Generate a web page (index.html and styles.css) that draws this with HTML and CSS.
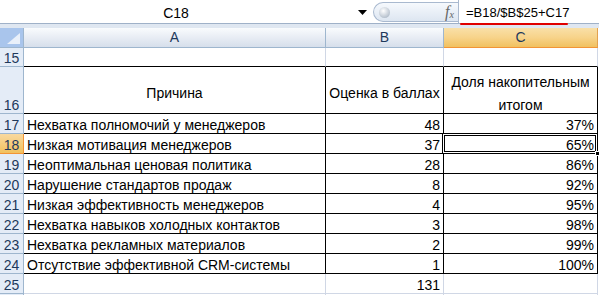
FILE: index.html
```html
<!DOCTYPE html>
<html>
<head>
<meta charset="utf-8">
<link rel="stylesheet" href="styles.css">
</head>
<body>
<div class="app">
  <div class="fbar">
    <div class="namebox">
      <span class="name">C18</span>
      <svg class="arrow" width="9" height="5" viewBox="0 0 9 5"><path d="M0 0H9L4.5 5Z" fill="#000"/></svg>
    </div>
    <div class="pill">
      <span class="knob"></span>
      <span class="fx">f<sub>x</sub></span>
    </div>
    <div class="formula"><span class="ftext">=B18/$B$25+C17</span><span class="redline"></span></div>
  </div>
  <div class="band"></div>
  <div class="sheet">
    <div class="corner"><span class="tri"></span></div>
    <div class="ch">A</div>
    <div class="ch">B</div>
    <div class="ch ch-sel">C</div>

    <div class="rh">15</div>
    <div class="c tb"></div>
    <div class="c tb"></div>
    <div class="c tb"></div>

    <div class="rh rh16">16</div>
    <div class="c t ctr">Причина</div>
    <div class="c t ctr">Оценка в баллах</div>
    <div class="c t ctr two">Доля накопительным<br>итогом</div>

    <div class="rh">17</div><div class="c t">Нехватка полномочий у менеджеров</div><div class="c t r">48</div><div class="c t r">37%</div>
    <div class="rh rh-sel">18</div><div class="c t">Низкая мотивация менеджеров</div><div class="c t r">37</div><div class="c t r active">65%<span class="sel"><span class="handle"></span></span></div>
    <div class="rh">19</div><div class="c t">Неоптимальная ценовая политика</div><div class="c t r">28</div><div class="c t r">86%</div>
    <div class="rh">20</div><div class="c t">Нарушение стандартов продаж</div><div class="c t r">8</div><div class="c t r">92%</div>
    <div class="rh">21</div><div class="c t">Низкая эффективность менеджеров</div><div class="c t r">4</div><div class="c t r">95%</div>
    <div class="rh">22</div><div class="c t">Нехватка навыков холодных контактов</div><div class="c t r">3</div><div class="c t r">98%</div>
    <div class="rh">23</div><div class="c t">Нехватка рекламных материалов</div><div class="c t r">2</div><div class="c t r">99%</div>
    <div class="rh">24</div><div class="c t">Отсутствие эффективной CRM-системы</div><div class="c t r">1</div><div class="c t r">100%</div>

    <div class="rh">25</div><div class="c"></div><div class="c r">131</div><div class="c"></div>
    <div class="rh"></div><div class="c"></div><div class="c"></div><div class="c"></div>
  </div>
</div>
</body>
</html>
```

FILE: styles.css
```css
* { box-sizing: border-box; }
html, body { margin: 0; padding: 0; }
body {
  width: 599px; height: 295px; overflow: hidden; background: #fff;
  font-family: "Liberation Sans", Arial, sans-serif; font-size: 14px; color: #000;
}
.app { width: 599px; height: 295px; overflow: hidden; background: #dfe6ef; }

.fbar {
  height: 24px; display: flex; background: #fff;
  border-bottom: 1px solid #9fb1c8; position: relative;
}
.namebox {
  width: 373px; display: flex; align-items: center;
}
.name { width: 352px; text-align: center; padding-top: 2px; }
.arrow { margin-left: 6px; margin-top: 1px; }
.pill {
  width: 85px; height: 20px; margin-top: 2px;
  border: 1px solid #a9b9cf; border-right: none;
  border-radius: 10px 0 0 10px;
  background: linear-gradient(#f6f9fd, #dde6f1);
  display: flex; align-items: center; justify-content: space-between;
  padding-left: 5px; padding-right: 4px;
}
.knob {
  width: 11px; height: 11px; border-radius: 50%;
  background: radial-gradient(circle at 40% 35%, #fff, #b9c3cf 70%, #98a4b3);
}
.fx {
  font-family: "Liberation Serif", serif; font-style: italic; color: #666;
  font-size: 16px; line-height: 1;
}
.fx sub { font-size: 10px; vertical-align: -1px; }
.formula {
  flex: 1; border-left: 1px solid #a9b9cf;
  padding-left: 7px; display: flex; align-items: center;
}
.ftext { font-size: 13px; padding-top: 2px; }
.redline {
  position: absolute; left: 460px; top: 23px; width: 108px; height: 2px;
  background: #e00000; border-radius: 1px; z-index: 2;
}
.band { height: 4px; background: #dfe7f1; }

.sheet {
  display: grid;
  grid-template-columns: 24px 302px 118px 154px;
  grid-template-rows: 20px 19px 47px repeat(9, 20px) 20px;
  background: #fff;
}
.corner {
  background: #a9c5ec; border-right: 1px solid #9eb6ce; border-bottom: 1px solid #9eb6ce;
  position: relative;
}
.tri {
  position: absolute; right: 3px; bottom: 3px; width: 0; height: 0;
  border-left: 13px solid transparent; border-bottom: 11px solid #e9f0fa;
}
.ch {
  background: linear-gradient(#f9fbfd, #e6ebf3 55%, #d6dfeb);
  border-right: 1px solid #9eb6ce; border-bottom: 1px solid #9eb6ce;
  text-align: center; line-height: 19px; color: #1e395b;
}
.ch-sel {
  background: linear-gradient(#f9e0a8, #f7d38a 50%, #f1c15f);
  border-right-color: #e2a14f; border-bottom-color: #f29436;
}
.rh {
  background: #e4ecf7; border-right: 1px solid #9eb6ce; border-bottom: 1px solid #9eb6ce;
  text-align: center; color: #1e395b; line-height: 16px;
  display: flex; align-items: flex-end; justify-content: center;
}
.rh-sel {
  background: linear-gradient(#f9d99f, #f1c15f); border-bottom-color: #f29436; border-right-color: #f29436;
}
.c {
  border-right: 1px solid #d0d7e5; border-bottom: 1px solid #d0d7e5;
  line-height: 16px; padding: 0 3px; white-space: nowrap;
  display: flex; align-items: flex-end;
}
.tb { border-bottom-color: #000; }
.t { border-right-color: #000; border-bottom-color: #000; }
.r { justify-content: flex-end; }
.ctr { justify-content: center; align-items: center; text-align: center; padding-top: 6px; line-height: 19px; }
.two { line-height: 23px; padding-top: 8px; }
.active { position: relative; }
.sel {
  position: absolute; left: -2px; top: -1px; right: -1px; bottom: -1px;
  border: 1px solid #000;
  box-shadow: inset 0 0 0 1px #fff, inset 0 0 0 2px #000;
}
.handle {
  position: absolute; right: -3px; bottom: -3px; width: 5px; height: 5px;
  background: #000; border: 1px solid #fff;
}
```
